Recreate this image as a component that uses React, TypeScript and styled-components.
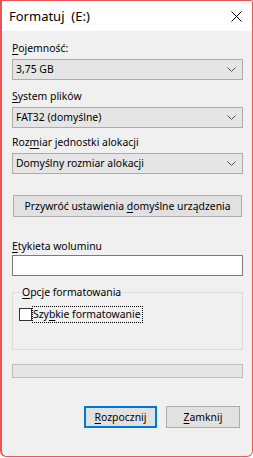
import React from "react";
import styled, { createGlobalStyle } from "styled-components";

const Global = createGlobalStyle`
  html, body { margin: 0; padding: 0; background: #ffffff; }
  body { font-family: "Segoe UI", "Noto Sans", "DejaVu Sans", sans-serif; font-size: 10.4px; color: #000; }
  * { box-sizing: border-box; }
`;

const Window = styled.div`
  width: 253px;
  height: 457px;
  border-style: solid;
  border-color: #ea5456;
  border-width: 1px 1px 1px 2px;
  border-radius: 0 2px 6px 6px;
  background: #f0f0f0;
  display: flex;
  flex-direction: column;
  overflow: hidden;
`;

const TitleBar = styled.div`
  height: 30px;
  background: #ffffff;
  display: flex;
  align-items: center;
  justify-content: space-between;
  padding: 0 10px 0 7px;
  flex: none;
`;

const Title = styled.span`
  font-size: 13px;
  line-height: 16px;
  color: #000;
  white-space: pre;
  margin-top: -1px;
`;

const Content = styled.div`
  display: flex;
  flex-direction: column;
  padding: 0 9px 0 10px;
`;

const Label = styled.div<{ $mt: number }>`
  margin-top: ${(p) => p.$mt}px;
  line-height: 15px;
  height: 15px;
  white-space: nowrap;
`;

const Mn = styled.span`
  text-decoration: underline;
  text-underline-offset: 2px;
`;

const Select = styled.div<{ $mt: number }>`
  margin-top: ${(p) => p.$mt}px;
  height: 21px;
  background: #e5e5e5;
  border: 1px solid #acacac;
  display: flex;
  align-items: center;
  justify-content: space-between;
  padding: 0 6px 0 3px;
  line-height: 15px;
`;

const WideButton = styled.div`
  margin: 21px 1px 0 1px;
  height: 22px;
  background: #e1e1e1;
  border: 1px solid #adadad;
  display: flex;
  align-items: center;
  justify-content: center;
  line-height: 15px;
`;

const TextInput = styled.div`
  margin-top: 1px;
  height: 21px;
  background: #ffffff;
  border: 1px solid #7a7a7a;
`;

const Group = styled.fieldset`
  margin: 9px 0 0 0;
  padding: 7px 6px 0 6px;
  height: 65px;
  border: 1px solid #dcdcdc;
  min-width: 0;
`;

const Legend = styled.legend`
  padding: 0 1px;
  margin-left: 2px;
  line-height: 15px;
`;

const CheckRow = styled.div`
  display: flex;
  align-items: center;
  gap: 1px;
`;

const Box = styled.span`
  width: 13px;
  height: 13px;
  background: #ffffff;
  border: 1px solid #333333;
  flex: none;
`;

const FocusLabel = styled.span`
  outline: 1px dotted #000;
  line-height: 15px;
  padding: 0 1px 0 0;
  white-space: nowrap;
`;

const Progress = styled.div`
  margin-top: 14px;
  height: 14px;
  background: #e6e6e6;
  border: 1px solid #bcbcbc;
`;

const ButtonRow = styled.div`
  margin-top: 28px;
  display: flex;
  justify-content: flex-end;
  gap: 9px;
  padding-right: 3px;
`;

const Button = styled.div<{ $default?: boolean }>`
  width: ${(p) => (p.$default ? 73 : 74)}px;
  height: 22px;
  background: #e1e1e1;
  border: ${(p) => (p.$default ? "2px solid #0078d7" : "1px solid #adadad")};
  display: flex;
  align-items: center;
  justify-content: center;
  line-height: 15px;
`;

const Chevron = () => (
  <svg width="9" height="5" viewBox="0 0 9 5" style={{ display: "block" }}>
    <path d="M0.5 0.5 L4.5 4.5 L8.5 0.5" fill="none" stroke="#505050" strokeWidth="1" />
  </svg>
);

const CloseIcon = () => (
  <svg width="11" height="11" viewBox="0 0 11 11" style={{ display: "block" }}>
    <path d="M0.5 0.5 L10.5 10.5 M10.5 0.5 L0.5 10.5" fill="none" stroke="#000" strokeWidth="1" />
  </svg>
);

export default function App() {
  return (
    <>
      <Global />
      <Window>
        <TitleBar>
          <Title>{"Formatuj  (E:)"}</Title>
          <CloseIcon />
        </TitleBar>
        <Content>
          <Label $mt={10}>
            <Mn>P</Mn>ojemność:
          </Label>
          <Select $mt={3}>
            <span>3,75 GB</span>
            <Chevron />
          </Select>
          <Label $mt={9}>
            <Mn>S</Mn>ystem plików
          </Label>
          <Select $mt={3}>
            <span>FAT32 (domyślne)</span>
            <Chevron />
          </Select>
          <Label $mt={7}>
            Roz<Mn>m</Mn>iar jednostki alokacji
          </Label>
          <Select $mt={3}>
            <span>Domyślny rozmiar alokacji</span>
            <Chevron />
          </Select>
          <WideButton>
            <span>
              Przywróć ustawienia <Mn>d</Mn>omyślne urządzenia
            </span>
          </WideButton>
          <Label $mt={22}>
            <Mn>E</Mn>tykieta woluminu
          </Label>
          <TextInput />
          <Group>
            <Legend>
              <Mn>O</Mn>pcje formatowania
            </Legend>
            <CheckRow>
              <Box />
              <FocusLabel>
                Szy<Mn>b</Mn>kie formatowanie
              </FocusLabel>
            </CheckRow>
          </Group>
          <Progress />
          <ButtonRow>
            <Button $default>
              <span>
                <Mn>R</Mn>ozpocznij
              </span>
            </Button>
            <Button>
              <span>
                <Mn>Z</Mn>amknij
              </span>
            </Button>
          </ButtonRow>
        </Content>
      </Window>
    </>
  );
}
